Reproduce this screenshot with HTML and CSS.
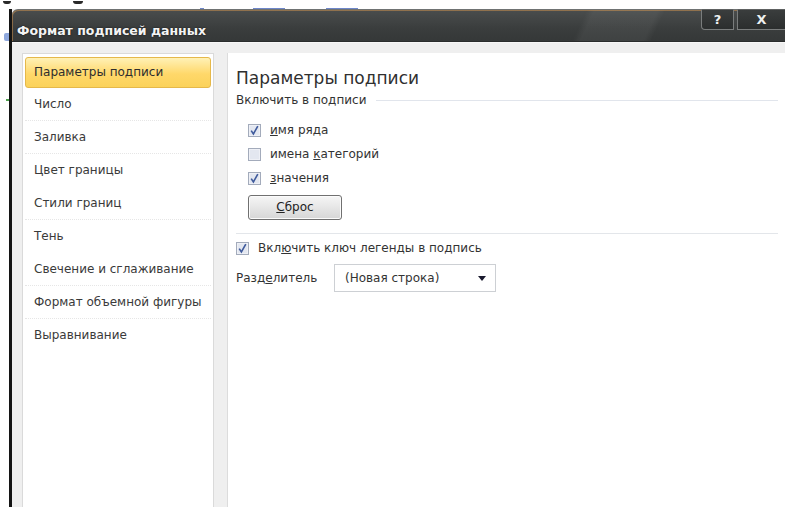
FILE: index.html
```html
<!DOCTYPE html>
<html lang="ru">
<head>
<meta charset="utf-8">
<title>Формат подписей данных</title>
<link rel="stylesheet" href="styles.css">
</head>
<body>
<div class="backdrop-top">
  <span class="ink ink-a"></span><span class="ink ink-b"></span>
  <span class="blue b1"></span><span class="blue b2"></span><span class="blue b3"></span>
</div>
<div class="stage">
  <div class="gutter">
    <span class="gut-blue"></span>
    <span class="gut-green"></span>
  </div>
  <div class="dialog">
    <div class="titlebar">
      <div class="title">Формат подписей данных</div>
      <div class="caption-buttons">
        <div class="cbtn cbtn-help">?</div>
        <div class="cbtn cbtn-close">X</div>
      </div>
    </div>
    <div class="frame">
      <ul class="nav">
        <li class="nav-item active">Параметры подписи</li>
        <li class="nav-item sep">Число</li>
        <li class="nav-item sep">Заливка</li>
        <li class="nav-item">Цвет границы</li>
        <li class="nav-item sep">Стили границ</li>
        <li class="nav-item">Тень</li>
        <li class="nav-item sep">Свечение и сглаживание</li>
        <li class="nav-item sep">Формат объемной фигуры</li>
        <li class="nav-item">Выравнивание</li>
      </ul>
      <div class="pane">
        <h1 class="pane-title">Параметры подписи</h1>
        <div class="group-head">
          <span>Включить в подписи</span>
          <span class="group-rule"></span>
        </div>
        <div class="checks">
          <label class="check">
            <svg class="box" viewBox="0 0 13 13" width="13" height="13"><rect x="0.5" y="0.5" width="12" height="12" fill="#eef0f6" stroke="#a3abbb"/><rect x="2" y="2" width="9" height="9" fill="#e3e7f0"/><path d="M3.2 6.6 L5.4 10 L9.8 2.2" fill="none" stroke="#3f5a9c" stroke-width="1.6"/></svg>
            <span><u>и</u>мя ряда</span>
          </label>
          <label class="check">
            <svg class="box" viewBox="0 0 13 13" width="13" height="13"><rect x="0.5" y="0.5" width="12" height="12" fill="#eef0f6" stroke="#a3abbb"/><rect x="2" y="2" width="9" height="9" fill="#e3e7f0"/></svg>
            <span>имена <u>к</u>атегорий</span>
          </label>
          <label class="check">
            <svg class="box" viewBox="0 0 13 13" width="13" height="13"><rect x="0.5" y="0.5" width="12" height="12" fill="#eef0f6" stroke="#a3abbb"/><rect x="2" y="2" width="9" height="9" fill="#e3e7f0"/><path d="M3.2 6.6 L5.4 10 L9.8 2.2" fill="none" stroke="#3f5a9c" stroke-width="1.6"/></svg>
            <span><u>з</u>начения</span>
          </label>
          <div class="btn"><u>С</u>брос</div>
        </div>
        <div class="rule"></div>
        <label class="check legend">
          <svg class="box" viewBox="0 0 13 13" width="13" height="13"><rect x="0.5" y="0.5" width="12" height="12" fill="#eef0f6" stroke="#a3abbb"/><rect x="2" y="2" width="9" height="9" fill="#e3e7f0"/><path d="M3.2 6.6 L5.4 10 L9.8 2.2" fill="none" stroke="#3f5a9c" stroke-width="1.6"/></svg>
          <span>Вкл<u>ю</u>чить ключ легенды в подпись</span>
        </label>
        <div class="sep-row">
          <span class="sep-label">Разд<u>е</u>литель</span>
          <div class="select">
            <span>(Новая строка)</span>
            <svg class="arrow" viewBox="0 0 8 5" width="8" height="5"><path d="M0 0 H8 L4 5 Z" fill="#1a1a2e"/></svg>
          </div>
        </div>
      </div>
    </div>
  </div>
</div>
</body>
</html>
```

FILE: styles.css
```css
html, body {
  margin: 0;
  padding: 0;
  background: #ffffff;
  overflow: hidden;
  height: 100%;
}

body {
  font-family: "DejaVu Sans", "Liberation Sans", sans-serif;
  color: #333333;
}

/* strip of the worksheet visible above the dialog */
.backdrop-top {
  height: 9px;
  overflow: hidden;
  display: flex;
  align-items: flex-end;
}
.ink {
  display: block;
  height: 3px;
  background: #2a2a2a;
  margin-bottom: 5px;
}
.ink-a { width: 8px; margin-left: 3px; border-radius: 0 0 4px 4px; }
.ink-b { width: 10px; margin-left: 62px; border-radius: 0 0 5px 5px; }
.blue {
  display: block;
  height: 1px;
  background: #6d86c9;
}
.b1 { width: 4px; margin-left: 117px; }
.b2 { width: 32px; margin-left: 49px; }
.b3 { width: 32px; margin-left: 41px; }

.stage {
  display: flex;
  height: calc(100% - 9px);
}

/* edge of the sheet left of the dialog */
.gutter {
  width: 9px;
  flex: none;
  display: flex;
  flex-direction: column;
  align-items: flex-end;
}
.gut-blue {
  display: block;
  width: 5px;
  height: 8px;
  margin-top: 24px;
  background: #8fa8dd;
  border-radius: 2px 0 0 2px;
}
.gut-green {
  display: block;
  width: 3px;
  height: 2px;
  margin-top: 58px;
  background: #4da04d;
}

.dialog {
  flex: 1;
  display: flex;
  flex-direction: column;
  border-left: 3px solid #141414;
  background: #efefef;
}

.titlebar {
  height: 33px;
  flex: none;
  display: flex;
  justify-content: space-between;
  align-items: flex-start;
  background:
    linear-gradient(115deg, rgba(255,255,255,0) 0%, rgba(255,255,255,0) 73%, rgba(255,255,255,0.05) 74%, rgba(255,255,255,0.05) 82%, rgba(255,255,255,0) 83%),
    linear-gradient(#4a4d4d, #3a3d3d 60%, #353838);
  border-top: 1px solid #6f7272;
  border-bottom: 1px solid #2a2c2c;
  box-sizing: border-box;
  border-top-left-radius: 6px;
  box-shadow: inset 1px 1px 0 rgba(230,160,80,0.45);
}

.title {
  font-family: "DejaVu Sans", sans-serif;
  font-weight: bold;
  font-size: 12.5px;
  color: #f4f4f4;
  padding: 13px 0 0 5px;
  text-shadow: 0 0 2px rgba(0,0,0,0.7);
}

.caption-buttons {
  display: flex;
  gap: 3px;
  margin-top: -1px;
}
.cbtn {
  height: 21px;
  box-sizing: border-box;
  border: 1px solid #7a7d7d;
  border-top-color: #5e6161;
  background: linear-gradient(#3a3d3d, #2b2e2e);
  color: #eef0f0;
  font-family: "DejaVu Sans", sans-serif;
  font-weight: bold;
  font-size: 13px;
  line-height: 19px;
  text-align: center;
}
.cbtn-help {
  width: 33px;
  border-bottom-left-radius: 4px;
}
.cbtn-close {
  width: 48px;
  border-right: none;
}

.frame {
  flex: 1;
  display: flex;
  padding: 10px 0 0 10px;
  border-top: 1px solid #f7f7f7;
}

.nav {
  list-style: none;
  margin: 0;
  padding: 3px 2px 0 2px;
  width: 192px;
  box-sizing: border-box;
  background: #ffffff;
  border: 1px solid #dadada;
  border-bottom: none;
  font-size: 12px;
}

.nav-item {
  height: 33px;
  line-height: 32px;
  padding-left: 9px;
  color: #3a3a3a;
  box-sizing: border-box;
  white-space: nowrap;
}
.nav-item.sep {
  border-bottom: 1px dotted #e6e6e6;
}
.nav-item.active {
  height: 31px;
  line-height: 29px;
  border: 1px solid #e5b84a;
  border-radius: 3px;
  padding-left: 8px;
  background: linear-gradient(#fff1b6, #ffd86a 55%, #fbd25a);
  color: #2e2e2e;
}

.pane {
  flex: 1;
  margin-left: 13px;
  background: #ffffff;
  border-left: 1px solid #dcdcdc;
  padding: 15px 7px 0 8px;
  font-size: 12px;
}

.pane-title {
  margin: 0;
  font-weight: normal;
  font-size: 17px;
  line-height: 20px;
  color: #2f2f2f;
}

.group-head {
  display: flex;
  align-items: center;
  gap: 10px;
  margin-top: 4px;
  height: 16px;
}
.group-rule {
  flex: 1;
  height: 1px;
  background: #e1e5ec;
}

.checks {
  padding: 10px 0 0 12px;
  display: flex;
  flex-direction: column;
  align-items: flex-start;
}

.check {
  display: flex;
  align-items: center;
  gap: 9px;
  height: 24px;
  color: #333;
}
.check u { text-decoration-thickness: 1px; }
.box { flex: none; }

.btn {
  margin-top: 5px;
  width: 94px;
  height: 25px;
  box-sizing: border-box;
  border: 1px solid #707070;
  border-radius: 3px;
  background: linear-gradient(#f6f6f6, #e6e6e6 50%, #d6d6d6);
  box-shadow: inset 0 0 0 1px #fbfbfb;
  text-align: center;
  line-height: 23px;
  color: #222;
}

.rule {
  height: 1px;
  background: #e3e6ea;
  margin: 13px 0 0 0;
}

.legend {
  margin-top: 2px;
}

.sep-row {
  display: flex;
  align-items: center;
  margin-top: 4px;
}
.sep-label { width: 98px; }
.select {
  width: 162px;
  height: 28px;
  box-sizing: border-box;
  border: 1px solid #cdd0d4;
  display: flex;
  align-items: center;
  justify-content: space-between;
  padding: 0 9px 0 10px;
  color: #333;
}
```
